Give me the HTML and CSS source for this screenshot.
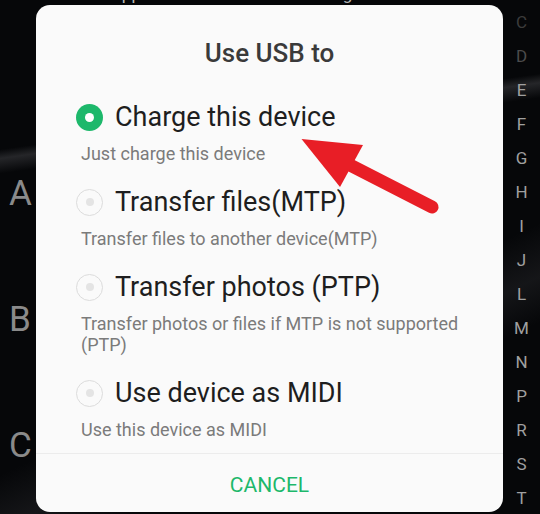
FILE: index.html
```html
<!DOCTYPE html>
<html>
<head>
<meta charset="utf-8">
<link rel="stylesheet" href="styles.css">
</head>
<body>
<div class="screen">
  <div class="alpha">
    <span>A</span>
    <span>B</span>
    <span>C</span>
  </div>
  <div class="middle">
    <div class="apps">
      <span class="app">WhatsApp</span>
      <span class="app">Chrome</span>
      <span class="app">Feelight</span>
      <span class="app">Camera</span>
    </div>
    <div class="dialog">
      <div class="title">Use USB to</div>
      <div class="options">
        <div class="option">
          <div class="row"><span class="radio on"></span><span class="label">Charge this device</span></div>
          <div class="sub">Just charge this device</div>
        </div>
        <div class="option">
          <div class="row"><span class="radio"></span><span class="label">Transfer files(MTP)</span></div>
          <div class="sub">Transfer files to another device(MTP)</div>
        </div>
        <div class="option">
          <div class="row"><span class="radio"></span><span class="label">Transfer photos (PTP)</span></div>
          <div class="sub">Transfer photos or files if MTP is not supported (PTP)</div>
        </div>
        <div class="option">
          <div class="row"><span class="radio"></span><span class="label">Use device as MIDI</span></div>
          <div class="sub">Use this device as MIDI</div>
        </div>
      </div>
      <div class="actions"><span class="cancel">CANCEL</span></div>
    </div>
  </div>
  <div class="index">
    <span class="dim1">C</span><span class="dim2">D</span><span>E</span><span>F</span><span>G</span><span>H</span><span>I</span><span>J</span><span>L</span><span>M</span><span>N</span><span>P</span><span>R</span><span>S</span><span>T</span>
  </div>
  <svg class="arrow" width="540" height="514" viewBox="0 0 540 514">
    <line x1="348" y1="164" x2="432" y2="207" stroke="#e81e26" stroke-width="13" stroke-linecap="round"/>
    <polygon points="301.5,139 363,145 340,187" fill="#e81e26"/>
  </svg>
</div>
</body>
</html>
```

FILE: styles.css
```css
* { box-sizing: border-box; }
html, body { margin: 0; padding: 0; }
body {
  width: 540px;
  height: 514px;
  overflow: hidden;
  font-family: Roboto, "Liberation Sans", sans-serif;
  background: #050608;
}
.screen {
  position: relative;
  width: 540px;
  height: 514px;
  overflow: hidden;
  display: grid;
  grid-template-columns: 36px 467px 37px;
  background:
    linear-gradient(172deg, transparent 0, transparent 148px, rgba(95,95,100,0.35) 157px, transparent 172px, transparent 100%),
    linear-gradient(155deg, transparent 0, transparent 62%, rgba(80,80,85,0.2) 69%, transparent 75%, transparent 100%),
    #060709;
}
.alpha {
  display: flex;
  flex-direction: column;
  padding-top: 131px;
  padding-left: 9px;
  color: #8a8a8a;
  font-size: 35px;
  line-height: 126px;
}
.middle {
  display: flex;
  flex-direction: column;
}
.apps {
  height: 5px;
  display: flex;
  padding-left: 7px;
  overflow: visible;
}
.app {
  width: 117.7px;
  flex: none;
  text-align: center;
  margin-top: -14px;
  font-size: 17px;
  line-height: 17px;
  color: #b8b8b8;
}
.dialog {
  height: 507px;
  background: #fafafa;
  border-radius: 14px;
  display: flex;
  flex-direction: column;
  padding-top: 30px;
}
.title {
  text-align: center;
  font-size: 26px;
  font-weight: 500;
  line-height: 36px;
  color: #3a3a3a;
}
.options {
  margin-top: 27px;
  padding: 0 20px 0 40px;
  display: flex;
  flex-direction: column;
  gap: 19px;
}
.row {
  display: flex;
  align-items: center;
  height: 38px;
}
.radio {
  width: 27px;
  height: 27px;
  border-radius: 50%;
  border: 1.5px solid #dcdcdc;
  background: #fafafa;
  display: flex;
  align-items: center;
  justify-content: center;
  margin-right: 12px;
  flex: none;
}
.radio::after {
  content: "";
  width: 8px;
  height: 8px;
  border-radius: 50%;
  background: #e4e4e4;
}
.radio.on {
  border: none;
  background: #1db86b;
}
.radio.on::after {
  width: 9px;
  height: 9px;
  background: #ffffff;
}
.label {
  font-size: 27px;
  color: #1e1e1e;
  white-space: nowrap;
}
.sub {
  margin-top: 7px;
  padding-left: 5px;
  font-size: 18px;
  line-height: 21px;
  color: #7b7b7b;
}
.actions {
  margin-top: 13px;
  border-top: 1px solid #ececec;
  flex: 1;
  padding-top: 4px;
  display: flex;
  align-items: center;
  justify-content: center;
}
.cancel {
  font-size: 21px;
  color: #1db86b;
}
.index {
  display: flex;
  flex-direction: column;
  padding-top: 5px;
  font-size: 17px;
  line-height: 34px;
  color: #a0a0a0;
  text-align: center;
}
.index span { width: 37px; }
.index .dim1 { color: #3c3c3c; }
.index .dim2 { color: #4c4c4c; }
.arrow {
  position: absolute;
  left: 0;
  top: 0;
  pointer-events: none;
}
```
